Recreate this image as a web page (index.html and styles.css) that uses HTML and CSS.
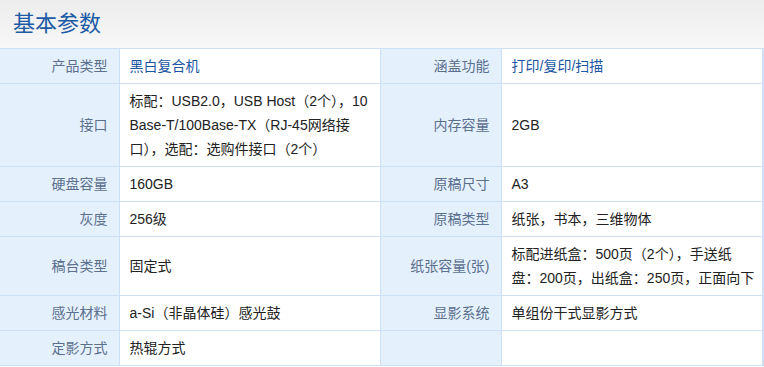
FILE: index.html
```html
<!DOCTYPE html>
<html lang="zh">
<head>
<meta charset="utf-8">
<title>基本参数</title>
<link rel="stylesheet" href="styles.css">
</head>
<body>
<div class="panel">
  <div class="head"><h2 class="title">基本参数</h2></div>
  <table class="params">
    <colgroup>
      <col class="c-label1"><col class="c-val1"><col class="c-label2"><col class="c-val2">
    </colgroup>
    <tr class="r1">
      <th>产品类型</th><td class="link">黑白复合机</td>
      <th>涵盖功能</th><td class="link">打印/复印/扫描</td>
    </tr>
    <tr class="r3">
      <th>接口</th><td>标配：USB2.0，USB Host（2个），10Base-T/100Base-TX（RJ-45网络接口），选配：选购件接口（2个）</td>
      <th>内存容量</th><td>2GB</td>
    </tr>
    <tr class="r1">
      <th>硬盘容量</th><td>160GB</td>
      <th>原稿尺寸</th><td>A3</td>
    </tr>
    <tr class="r1">
      <th>灰度</th><td>256级</td>
      <th>原稿类型</th><td>纸张，书本，三维物体</td>
    </tr>
    <tr class="r2">
      <th>稿台类型</th><td>固定式</td>
      <th>纸张容量(张)</th><td>标配进纸盒：500页（2个），手送纸盘：200页，出纸盒：250页，正面向下</td>
    </tr>
    <tr class="r1">
      <th>感光材料</th><td>a-Si（非晶体硅）感光鼓</td>
      <th>显影系统</th><td>单组份干式显影方式</td>
    </tr>
    <tr class="r1">
      <th>定影方式</th><td>热辊方式</td>
      <th></th><td></td>
    </tr>
  </table>
</div>
</body>
</html>
```

FILE: styles.css
```css
html, body {
  margin: 0;
  padding: 0;
  background: #ffffff;
}
body {
  font-family: "Liberation Sans", Arial, "Noto Sans CJK SC", sans-serif;
  font-size: 14px;
  color: #222222;
}
.panel {
  width: 764px;
}
.head {
  height: 48px;
  background: linear-gradient(#ececec, #f8f8f8);
  display: flex;
  align-items: center;
  padding-left: 13px;
  box-sizing: border-box;
}
.title {
  margin: 0;
  font-size: 22px;
  font-weight: normal;
  color: #1d5aa6;
  line-height: 1;
  padding-bottom: 1px;
}
.params {
  border-collapse: collapse;
  table-layout: fixed;
  width: 763px;
  border-right: 2px solid #cde0f7;
}
.c-label1 { width: 119px; }
.c-val1 { width: 261px; }
.c-label2 { width: 121px; }
.c-val2 { width: 262px; }
.params th,
.params td {
  border: 1px solid #cde0f7;
  border-left: 0;
  line-height: 24px;
  padding: 5px 10px;
  vertical-align: middle;
}
.params th {
  background: #e5f0fd;
  color: #5b6f8e;
  font-weight: normal;
  text-align: right;
  padding-right: 11px;
  border-right: 1px solid #cde0f7;
}
.params td {
  text-align: left;
  word-break: break-all;
  padding-right: 6px;
}
.params td.link {
  color: #1b56a3;
}
.r1 { height: 35px; }
.r2 { height: 59px; }
.r3 { height: 83px; }
```
